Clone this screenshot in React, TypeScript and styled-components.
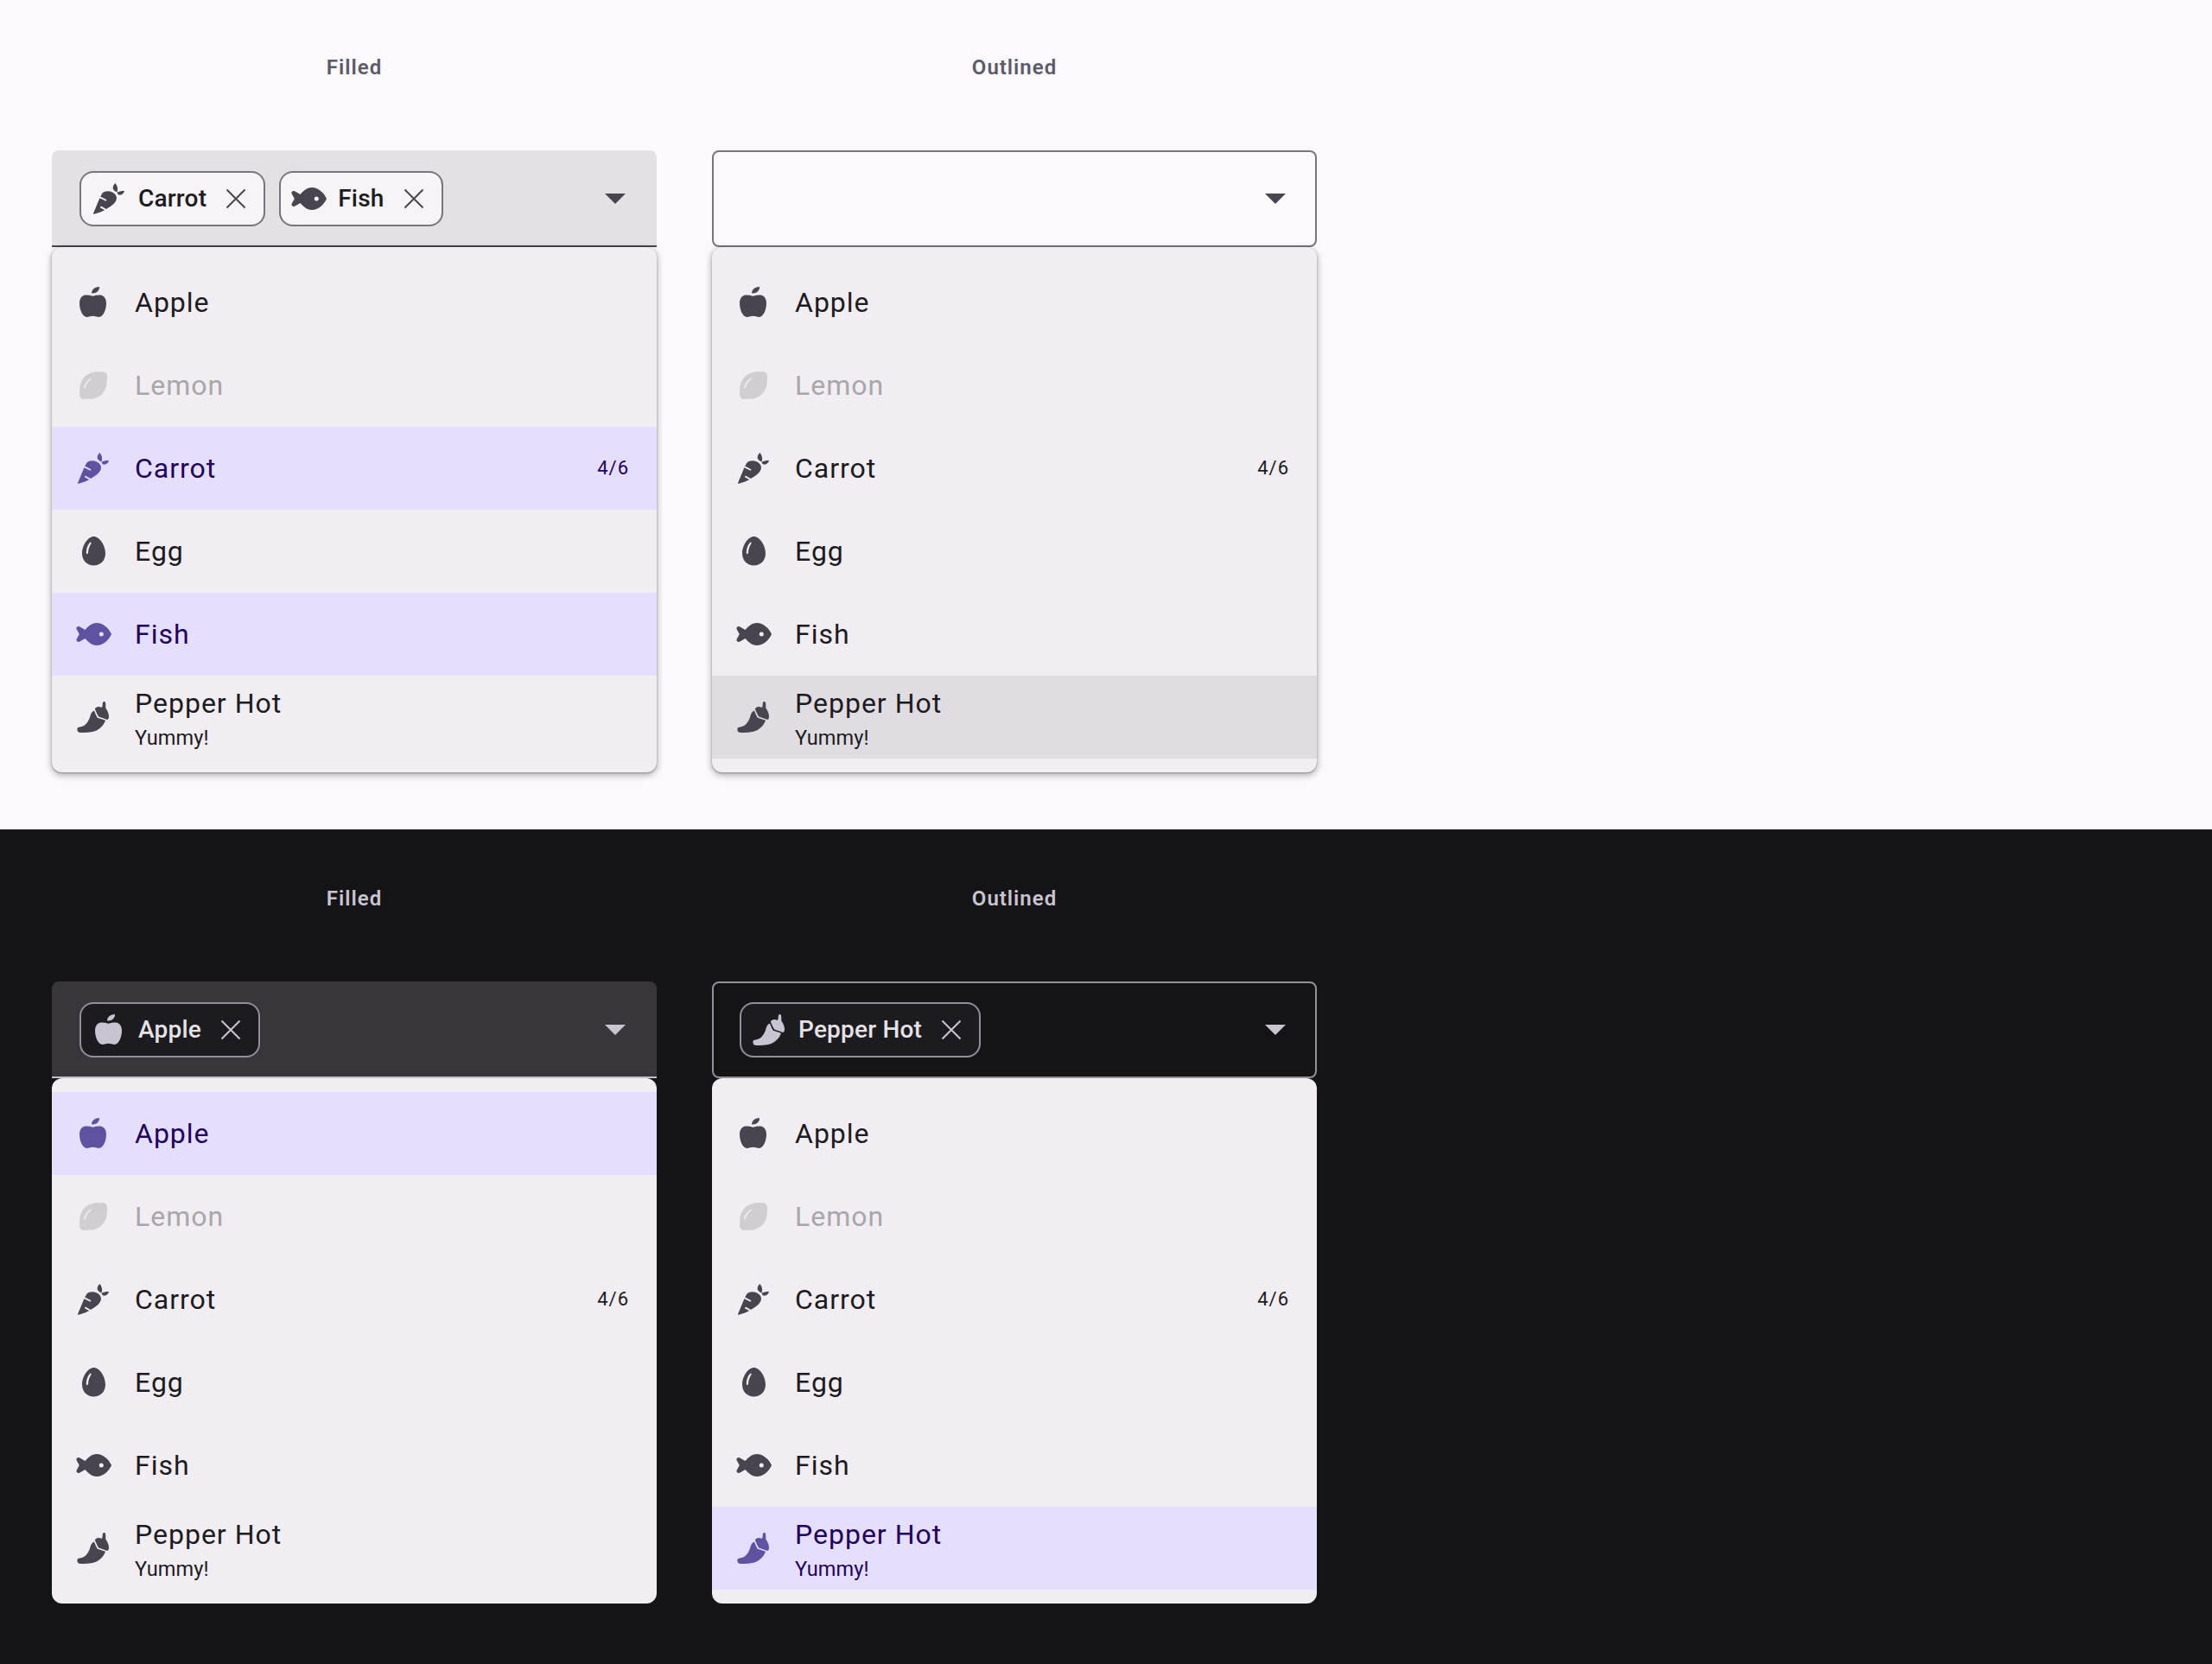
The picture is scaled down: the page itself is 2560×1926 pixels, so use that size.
import React from 'react';
import styled, { createGlobalStyle, ThemeProvider } from 'styled-components';

const lightTheme = {
  page: '#fbf9fc',
  sectionTop: '58px',
  sectionBottom: '66px',
  label: '#5c5a6a',
  filled: '#e3e1e4',
  underline: '#49454f',
  outline: '#79747e',
  chipBg: '#f7f3f7',
  chipText: '#1c1b1f',
  chipIcon: '#49454f',
  arrow: '#49454f',
  shadow: '0 2px 6px 2px rgba(0,0,0,0.15), 0 1px 2px rgba(0,0,0,0.3), 0 4px 8px rgba(0,0,0,0.12)',
};

const darkTheme = {
  page: '#141316',
  sectionTop: '60px',
  sectionBottom: '70px',
  label: '#cac4d0',
  filled: '#38363b',
  underline: '#c4bfca',
  outline: '#938f99',
  chipBg: '#1c1b1f',
  chipText: '#e6e1e5',
  chipIcon: '#cac4d0',
  arrow: '#cac4d0',
  shadow: 'none',
};

const GlobalStyle = createGlobalStyle`
  html, body {
    margin: 0;
    padding: 0;
    background: #141316;
  }
  body {
    font-family: Roboto, "Liberation Sans", sans-serif;
  }
`;

const Section = styled.section`
  background: ${(props) => props.theme.page};
  padding: ${(props) => props.theme.sectionTop} 0 ${(props) => props.theme.sectionBottom} 60px;
  display: flex;
  gap: 64px;
`;

const Column = styled.div`
  width: 700px;
`;

const Label = styled.div`
  height: 40px;
  line-height: 40px;
  margin-bottom: 76px;
  text-align: center;
  font-size: 24px;
  font-weight: 600;
  letter-spacing: 1px;
  color: ${(props) => props.theme.label};
`;

const Field = styled.div<{ $variant: 'filled' | 'outlined' }>`
  box-sizing: border-box;
  height: 112px;
  display: flex;
  align-items: center;
  gap: 16px;
  padding: ${(props) => (props.$variant === 'filled' ? '2px 36px 0 32px' : '0 34px 0 30px')};
  background: ${(props) => (props.$variant === 'filled' ? props.theme.filled : 'transparent')};
  border-radius: ${(props) => (props.$variant === 'filled' ? '8px 8px 0 0' : '8px')};
  border: ${(props) => (props.$variant === 'filled' ? 'none' : `2px solid ${props.theme.outline}`)};
  border-bottom: 2px solid ${(props) => (props.$variant === 'filled' ? props.theme.underline : props.theme.outline)};
`;

const Chip = styled.div`
  box-sizing: border-box;
  height: 64px;
  display: flex;
  align-items: center;
  padding: 0 14px 0 8px;
  border: 2px solid ${(props) => props.theme.outline};
  border-radius: 16px;
  background: ${(props) => props.theme.chipBg};
  color: ${(props) => props.theme.chipIcon};
`;

const ChipText = styled.span`
  margin: 0 16px 2px 10px;
  font-size: 28px;
  font-weight: 500;
  letter-spacing: 0.2px;
  color: ${(props) => props.theme.chipText};
`;

const ChipClose = styled.svg`
  width: 36px;
  height: 36px;
  flex: none;
  stroke: currentColor;
  stroke-width: 2;
  fill: none;
`;

const Arrow = styled.svg`
  width: 24px;
  height: 12px;
  margin-left: auto;
  flex: none;
  fill: ${(props) => props.theme.arrow};
`;

const Menu = styled.div`
  padding: 16px 0;
  background: #f1edf2;
  border-radius: 12px;
  box-shadow: ${(props) => props.theme.shadow};
  position: relative;
`;

const Row = styled.div<{ $state?: 'selected' | 'hover' | 'disabled' }>`
  height: 96px;
  display: flex;
  align-items: center;
  gap: 24px;
  padding: 0 32px 0 24px;
  background: ${(props) =>
    props.$state === 'selected' ? '#e5defd' : props.$state === 'hover' ? '#e0dce1' : 'transparent'};
  color: ${(props) =>
    props.$state === 'selected' ? '#21005d' : props.$state === 'disabled' ? '#a8a6aa' : '#1c1b1f'};
`;

const IconBox = styled.svg`
  width: 48px;
  height: 48px;
  flex: none;
  fill: currentColor;
`;

const RowIcon = styled(IconBox)<{ $state?: 'selected' | 'hover' | 'disabled' }>`
  fill: ${(props) =>
    props.$state === 'selected' ? '#5f53a1' : props.$state === 'disabled' ? '#d0ced2' : '#49454f'};
`;

const RowBody = styled.div`
  flex: 1;
`;

const RowTitle = styled.div`
  font-size: 32px;
  line-height: 48px;
  letter-spacing: 1px;
`;

const RowHint = styled.div`
  font-size: 23.5px;
  line-height: 32px;
  letter-spacing: 0.1px;
`;

const RowTrailing = styled.span`
  font-size: 22px;
  line-height: 30px;
  margin-bottom: 1px;
  letter-spacing: 1px;
`;

const Cut = ({ d }: { d: string }) => <path fillRule="evenodd" d={d} />;

const glyphs = {
  apple: (
    <>
      <path d="M23.5 16.8C20.5 15.8 17.5 15.4 15 15.6C10.5 16 8 20 8 25C8 32 11.5 41 16.5 41C19 41 21 39.8 23.5 39.8C26 39.8 28 41 30.5 41C35.5 41 39 32 39 25C39 20 36.5 16 32 15.6C29.5 15.4 26.5 15.8 23.5 16.8Z" />
      <path d="M22 13.5C22 9 26 6 31 6C31.5 10 27.5 14 22 13.5Z" />
    </>
  ),
  lemon: (
    <Cut d="M34.5 8.2C38 8.2 40 10 40 13.5C40 15.5 39.8 17 39.8 19C39.8 25 37.5 30.5 34 34C30.5 37.5 25 39.8 19 39.8C17 39.8 15.5 40 13.5 40C10 40 8 38 8 34.5C8 32.5 8.2 31 8.2 29C8.2 23 10.5 17.5 14 14C17.5 10.5 23 8.2 29 8.2C31 8.2 32.5 8.2 34.5 8.2ZM13 26.5C14 22 17 18 21 15.8C22 15.3 22.6 16.4 21.7 17C18.2 19 15.8 22.6 14.8 26.8C14.5 28 12.8 27.6 13 26.5Z" />
  ),
  carrot: (
    <>
      <path d="M6 41L13.4 23.3L20.6 26.8L21.4 25.2L14.2 21.6L16.5 17.5C19 15 24 14.5 28 16.5C32 18.5 34 22 32.5 25.5C31 30 26 33 21 36L14.8 32.6L13.9 34.2L19.3 37.2C14 39.5 9 41.5 6.8 41.7C6 41.7 5.8 41.4 6 41Z" />
      <path d="M31.5 6C29 8 28 11 29 13C30 15 32 16 33.5 16.2C34.8 13 34 9 31.5 6Z" />
      <path d="M33.5 16.5C36 15.5 39 14.8 42 15C41.5 18 38.5 20.3 35.8 19.6C34.5 19.2 33.8 18 33.5 16.5Z" />
    </>
  ),
  egg: (
    <Cut d="M24.5 7C31 7 38 17 38 26.5C38 35 32 40.5 24.5 40.5C17 40.5 11 35 11 26.5C11 17 18 7 24.5 7ZM15.8 26C15.8 21 17.5 16.5 20.3 13.8C21 13 22 14 21.5 15C19.5 18 18 22 18 26C18 27.5 15.8 27.5 15.8 26Z" />
  ),
  fish: (
    <Cut d="M45 24C42 31 35 37 28 37C22 37 17.5 32.5 14.5 29L8 32.8C6 33.5 4 32 4.5 30L7.8 24L4.5 18C4 16 6 14.5 8 15.2L14.5 19C17.5 15.5 22 11 28 11C35 11 42 17 45 24ZM33.3 21.5A2.5 2.5 0 1 0 33.3 26.5A2.5 2.5 0 1 0 33.3 21.5Z" />
  ),
  pepper: (
    <>
      <path d="M6.3 36C9 35.5 12 35 14.5 33C17.5 30.5 19.5 26.5 20.5 22.5C21.3 19.5 22.5 17.5 25 16.5L27 21.5L28.8 24.8L38 27.8C36 34 30.5 39.5 23 41C18 42 12 42.2 8 41.8C5 41.3 4.8 36.8 6.3 36Z" />
      <path d="M25.8 14.5C27 12.5 29 11.5 31.5 12.3C32.5 12.6 33.5 13 34 12.5C35 11 34.5 8.5 35 7C35.5 5.8 37.5 5.8 38 7C38.5 9 38 12 38.5 14C40.5 16.5 42 20 42 23.5C42 25 41.3 26.8 40.2 27L38 26.2L30.2 23.5L28.4 20.5Z" />
    </>
  ),
};

type Food = keyof typeof glyphs;

const foods: { id: Food; name: string; hint?: string; trailing?: string; disabled?: boolean }[] = [
  { id: 'apple', name: 'Apple' },
  { id: 'lemon', name: 'Lemon', disabled: true },
  { id: 'carrot', name: 'Carrot', trailing: '4/6' },
  { id: 'egg', name: 'Egg' },
  { id: 'fish', name: 'Fish' },
  { id: 'pepper', name: 'Pepper Hot', hint: 'Yummy!' },
];

const nameOf = (id: Food) => foods.find((f) => f.id === id)!.name;

const SelectChip = ({ id }: { id: Food }) => (
  <Chip>
    <IconBox viewBox="0 0 48 48">{glyphs[id]}</IconBox>
    <ChipText>{nameOf(id)}</ChipText>
    <ChipClose viewBox="0 0 36 36">
      <path d="M7.5 7.5L28.5 28.5M28.5 7.5L7.5 28.5" />
    </ChipClose>
  </Chip>
);

type SelectProps = {
  title: string;
  variant: 'filled' | 'outlined';
  chips?: Food[];
  selected?: Food[];
  hover?: Food;
};

const Select = ({ title, variant, chips = [], selected = [], hover }: SelectProps) => (
  <Column>
    <Label>{title}</Label>
    <Field $variant={variant}>
      {chips.map((id) => (
        <SelectChip id={id} key={id} />
      ))}
      <Arrow viewBox="0 0 24 12">
        <path d="M0 0H24L12 12Z" />
      </Arrow>
    </Field>
    <Menu>
      {foods.map((food) => {
        const state = food.disabled
          ? 'disabled'
          : selected.includes(food.id)
            ? 'selected'
            : hover === food.id
              ? 'hover'
              : undefined;
        return (
          <Row $state={state} key={food.id}>
            <RowIcon $state={state} viewBox="0 0 48 48">
              {glyphs[food.id]}
            </RowIcon>
            <RowBody>
              <RowTitle>{food.name}</RowTitle>
              {food.hint && <RowHint>{food.hint}</RowHint>}
            </RowBody>
            {food.trailing && <RowTrailing>{food.trailing}</RowTrailing>}
          </Row>
        );
      })}
    </Menu>
  </Column>
);

const App = () => (
  <>
    <GlobalStyle />
    <ThemeProvider theme={lightTheme}>
      <Section>
        <Select title="Filled" variant="filled" chips={['carrot', 'fish']} selected={['carrot', 'fish']} />
        <Select title="Outlined" variant="outlined" hover="pepper" />
      </Section>
    </ThemeProvider>
    <ThemeProvider theme={darkTheme}>
      <Section>
        <Select title="Filled" variant="filled" chips={['apple']} selected={['apple']} />
        <Select title="Outlined" variant="outlined" chips={['pepper']} selected={['pepper']} />
      </Section>
    </ThemeProvider>
  </>
);

export default App;
